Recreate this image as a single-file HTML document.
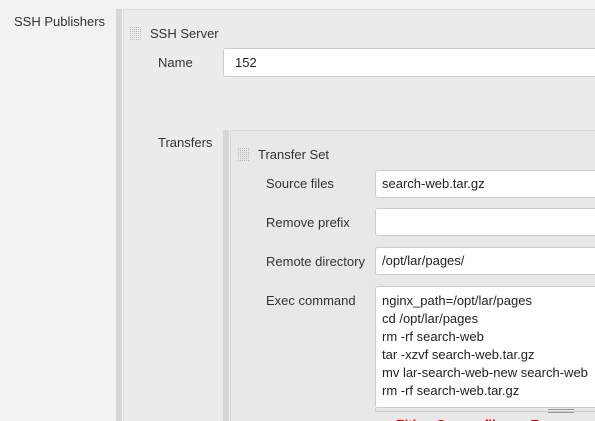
<!DOCTYPE html>
<html><head><style>
html,body{margin:0;width:595px;height:421px;overflow:hidden}
body{background:#f2f2f2;font-family:"Liberation Sans",Arial,sans-serif;font-size:13px;color:#333;position:relative}
.a{position:absolute}
.inp{position:absolute;background:#fff;border:1px solid #ccc;border-radius:3px;box-sizing:border-box;color:#222;font-size:13px;padding-left:6px}
</style></head><body>
<svg width="0" height="0" style="position:absolute"><defs><pattern id="p" width="2" height="2" patternUnits="userSpaceOnUse"><rect width="1" height="1" fill="#bbb"/></pattern></defs></svg>
<div class="a" style="left:14px;top:14px">SSH Publishers</div>
<div class="a" style="left:116px;top:9px;width:6px;height:412px;background:#d6d6d6"></div>
<div class="a" style="left:123px;top:9px;width:472px;height:412px;background:#ececec;border-top:1px solid #ddd;border-left:1px solid #ddd"></div>
<svg class="a" style="left:130px;top:27px" width="12" height="14"><rect width="12" height="14" fill="url(#p)"/></svg>
<div class="a" style="left:150px;top:26px">SSH Server</div>
<div class="a" style="left:158px;top:55px">Name</div>
<div class="inp" style="left:223px;top:48px;width:380px;height:29px;line-height:27px;padding-left:11px">152</div>
<div class="a" style="left:158px;top:135px">Transfers</div>
<div class="a" style="left:223px;top:130px;width:6px;height:291px;background:#d6d6d6"></div>
<div class="a" style="left:230px;top:130px;width:365px;height:291px;background:#e8e8e8;border-top:1px solid #d8d8d8;border-left:1px solid #d8d8d8"></div>
<svg class="a" style="left:238px;top:148px" width="12" height="14"><rect width="12" height="14" fill="url(#p)"/></svg>
<div class="a" style="left:258px;top:147px">Transfer Set</div>
<div class="a" style="left:266px;top:176px">Source files</div>
<div class="inp" style="left:375px;top:170px;width:230px;height:28px;line-height:26px">search-web.tar.gz</div>
<div class="a" style="left:266px;top:215px">Remove prefix</div>
<div class="inp" style="left:375px;top:208px;width:230px;height:28px"></div>
<div class="a" style="left:266px;top:254px">Remote directory</div>
<div class="inp" style="left:375px;top:247px;width:230px;height:28px;line-height:26px">/opt/lar/pages/</div>
<div class="a" style="left:266px;top:293px">Exec command</div>
<div class="inp" style="left:375px;top:286px;width:230px;height:122px;padding-top:5px;line-height:18px">nginx_path=/opt/lar/pages<br>cd /opt/lar/pages<br>rm -rf search-web<br>tar -xzvf search-web.tar.gz<br>mv lar-search-web-new search-web<br>rm -rf search-web.tar.gz</div>
<div class="a" style="left:375px;top:408px;width:230px;height:3px;border:1px solid #ccc;border-top:none;background:#e8e8e8"></div>
<div class="a" style="left:548px;top:409px;width:26px;height:2px;border-top:1px solid #999;border-bottom:1px solid #999"></div>
<div class="a" style="left:396px;top:417px;color:#d00;font-weight:bold;font-size:13px">Either Source files or Exec</div>
</body></html>
